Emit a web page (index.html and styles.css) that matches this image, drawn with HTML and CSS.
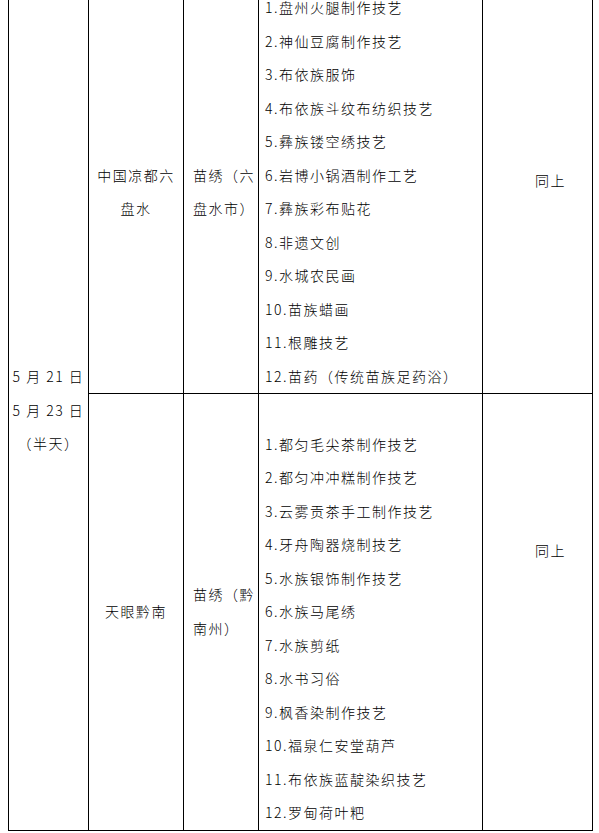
FILE: index.html
```html
<!DOCTYPE html>
<html lang="zh-CN">
<head>
<meta charset="utf-8">
<title>非遗项目表</title>
<link rel="stylesheet" href="styles.css">
</head>
<body>
<table class="sheet">
  <colgroup>
    <col class="c-date">
    <col class="c-place">
    <col class="c-item">
    <col class="c-list">
    <col class="c-note">
  </colgroup>
  <tr>
    <td class="date" rowspan="2">5 月 21 日<br>5 月 23 日<br>（半天）</td>
    <td class="place">中国凉都六<br>盘水</td>
    <td class="item">苗绣（六<br>盘水市）</td>
    <td class="list">
      <div class="li">1.盘州火腿制作技艺</div>
      <div class="li">2.神仙豆腐制作技艺</div>
      <div class="li">3.布依族服饰</div>
      <div class="li">4.布依族斗纹布纺织技艺</div>
      <div class="li">5.彝族镂空绣技艺</div>
      <div class="li">6.岩博小锅酒制作工艺</div>
      <div class="li">7.彝族彩布贴花</div>
      <div class="li">8.非遗文创</div>
      <div class="li">9.水城农民画</div>
      <div class="li">10.苗族蜡画</div>
      <div class="li">11.根雕技艺</div>
      <div class="li">12.苗药（传统苗族足药浴）</div>
    </td>
    <td class="note note-1">同上</td>
  </tr>
  <tr>
    <td class="place">天眼黔南</td>
    <td class="item">苗绣（黔<br>南州）</td>
    <td class="list">
      <div class="li empty">&nbsp;</div>
      <div class="li">1.都匀毛尖茶制作技艺</div>
      <div class="li">2.都匀冲冲糕制作技艺</div>
      <div class="li">3.云雾贡茶手工制作技艺</div>
      <div class="li">4.牙舟陶器烧制技艺</div>
      <div class="li">5.水族银饰制作技艺</div>
      <div class="li">6.水族马尾绣</div>
      <div class="li">7.水族剪纸</div>
      <div class="li">8.水书习俗</div>
      <div class="li">9.枫香染制作技艺</div>
      <div class="li">10.福泉仁安堂葫芦</div>
      <div class="li">11.布依族蓝靛染织技艺</div>
      <div class="li">12.罗甸荷叶粑</div>
    </td>
    <td class="note note-2">同上</td>
  </tr>
</table>
</body>
</html>
```

FILE: styles.css
```css
html, body {
  background: #fff;
}
body {
  margin: 0;
  font-family: "Noto Sans CJK SC", "Noto Sans", sans-serif;
  font-size: 14px;
  font-weight: 300;
  color: #000;
}
.sheet {
  margin: -10px 0 0 8px;
  border-collapse: collapse;
  table-layout: fixed;
  width: 584px;
}
.c-date { width: 80px; }
.c-place { width: 95px; }
.c-item { width: 75px; }
.c-list { width: 224px; }
.c-note { width: 110px; }
.sheet td {
  border: 1px solid #000;
  padding: 0;
  line-height: 33.5px;
  letter-spacing: 1.5px;
}
.date {
  text-align: center;
  vertical-align: middle;
}
.place {
  text-align: center;
  vertical-align: middle;
}
.item {
  text-align: left;
  vertical-align: middle;
  padding-left: 9px !important;
}
.list {
  vertical-align: top;
  padding-left: 6px !important;
  white-space: nowrap;
}
.li {
  height: 33.5px;
}
.note {
  vertical-align: top;
  padding-left: 52px !important;
}
.note-1 { padding-top: 173px !important; }
.note-2 { padding-top: 140px !important; }
```
